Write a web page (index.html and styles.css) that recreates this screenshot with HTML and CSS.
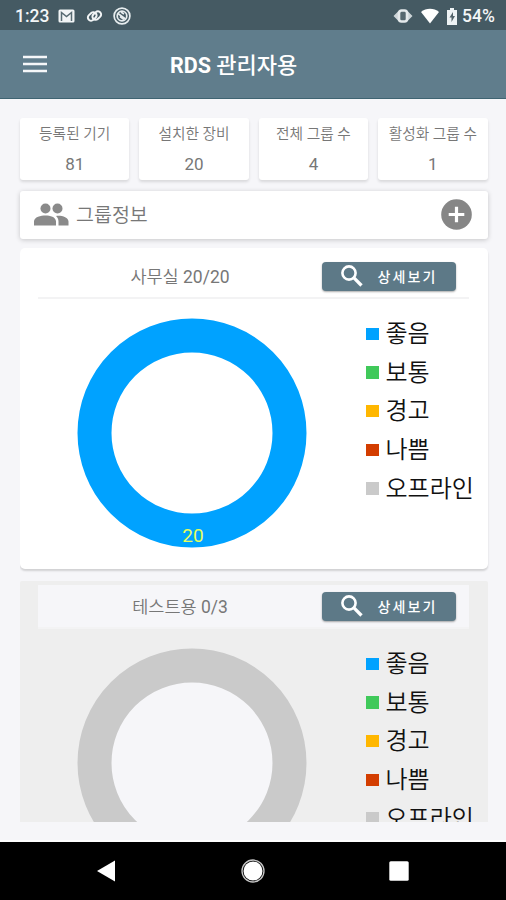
FILE: index.html
```html
<!DOCTYPE html>
<html lang="ko">
<head>
<meta charset="utf-8">
<title>RDS 관리자용</title>
<link rel="stylesheet" href="styles.css">
</head>
<body>
<div class="phone">
  <div class="status">
    <span class="time">1:23</span>
    <svg class="mail" width="17" height="14" viewBox="0 0 17 14"><rect x=".5" y=".5" width="16" height="13" rx="1.5" fill="#f2f5f6"/><path d="M3.5 12V3.5l5 4 5-4V12" fill="none" stroke="#586b73" stroke-width="1.5"/></svg>
    <svg class="link" width="17" height="16" viewBox="0 0 17 16" fill="none" stroke="#f2f5f6" stroke-width="2"><rect x="1.5" y="5.3" width="9.5" height="6.4" rx="3.2" transform="rotate(-42 6.2 8.5)"/><rect x="6" y="4.3" width="9.5" height="6.4" rx="3.2" transform="rotate(-42 10.8 7.5)"/></svg>
    <svg class="whale" width="18" height="18" viewBox="0 0 18 18" fill="none" stroke="#e7edef"><circle cx="9" cy="9" r="7.9" stroke-width="1.7"/><circle cx="9" cy="9" r="4.8" stroke-width="1.7"/><path d="M5 6.5l7.5 5.5M7 9.5l4 3M8 5l3 2" stroke-width="1.6"/></svg>
    <span class="spacer"></span>
    <svg class="vibrate" width="20" height="16" viewBox="0 0 20 16"><path d="M.5 8L5 3.500v9zM19.500 8L15 3.500v9z" fill="#cdd5d8"/><rect x="6" y="2.500" width="8" height="11" rx="2.500" fill="#56686f" stroke="#e4e9eb" stroke-width="2.600"/></svg>
    <svg class="wifi" width="18" height="16" viewBox="0 0 18 16"><path d="M0 4C5-.4 13-.4 18 4L9 15.500z" fill="#fff"/></svg>
    <svg class="battery" width="10" height="17" viewBox="0 0 10 17"><path d="M3 0h4v2h3v15H0V2h3z" fill="#edf2f4"/><path d="M6 4L2.500 9.500h2V14L8 8H6z" fill="#526269"/></svg>
    <span class="percent">54%</span>
  </div>
  <header class="appbar">
    <svg class="menu" width="24" height="18" viewBox="0 0 24 18"><path d="M0 2h24M0 9h24M0 16h24" stroke="#f5f7f9" stroke-width="2.600"/></svg>
    <h1>RDS <span>관리자용</span></h1>
  </header>
  <main class="content">
    <section class="stats">
      <div class="stat"><span>등록된 기기</span><b>81</b></div>
      <div class="stat"><span>설치한 장비</span><b>20</b></div>
      <div class="stat"><span>전체 그룹 수</span><b>4</b></div>
      <div class="stat"><span>활성화 그룹 수</span><b>1</b></div>
    </section>
    <section class="groupbar">
      <svg class="people" width="35" height="23" viewBox="0 0 35 23" fill="#8a8a8a"><circle cx="11.500" cy="5.500" r="5"/><circle cx="23.500" cy="5.500" r="5"/><path d="M0 22.500v-4C0 14 7 12.500 11.500 12.500S22 14 22 18.500v4zM24.500 22.500v-4c0-2.300-1.200-4.300-2.500-5.500 5-.8 12.500 1.200 12.500 5.500v4z"/></svg>
      <h2>그룹정보</h2>
      <svg class="add" width="31" height="31" viewBox="0 0 31 31"><circle cx="15.500" cy="15.500" r="15.300" fill="#868686"/><path d="M15.500 7.700v15.600M7.700 15.500h15.600" stroke="#fff" stroke-width="3.200"/></svg>
    </section>
    <div class="list">
      <article class="card online">
        <div class="card-head">
          <h3>사무실 <span>20/20</span></h3>
          <button class="detail"><svg width="22" height="22" viewBox="0 0 22 22" fill="none" stroke="#fff"><circle cx="8" cy="8" r="6.600" stroke-width="2.600"/><path d="M12.700 12.700l7.800 7.800" stroke-width="3.300"/></svg><span>상세보기</span></button>
        </div>
        <div class="card-body">
          <svg class="donut" width="230" height="230" viewBox="0 0 230 230"><circle cx="115" cy="115" r="97.500" fill="#fff" stroke="#00a2ff" stroke-width="34"/><text x="116" y="224" text-anchor="middle">20</text></svg>
          <ul class="legend"><li class="good">좋음</li><li class="normal">보통</li><li class="warn">경고</li><li class="bad">나쁨</li><li class="off">오프라인</li></ul>
        </div>
      </article>
      <article class="card offline">
        <div class="card-head">
          <h3>테스트용 <span>0/3</span></h3>
          <button class="detail"><svg width="22" height="22" viewBox="0 0 22 22" fill="none" stroke="#fff"><circle cx="8" cy="8" r="6.600" stroke-width="2.600"/><path d="M12.700 12.700l7.800 7.800" stroke-width="3.300"/></svg><span>상세보기</span></button>
        </div>
        <div class="card-body">
          <svg class="donut" width="230" height="230" viewBox="0 0 230 230"><circle cx="115" cy="115" r="97.500" fill="#f6f6f9" stroke="#cacaca" stroke-width="34"/></svg>
          <ul class="legend"><li class="good">좋음</li><li class="normal">보통</li><li class="warn">경고</li><li class="bad">나쁨</li><li class="off">오프라인</li></ul>
        </div>
      </article>
    </div>
  </main>
  <nav class="navbar">
    <svg width="20" height="24" viewBox="0 0 20 24"><path d="M1 12L19 1.500v21z" fill="#fff"/></svg>
    <svg width="24" height="24" viewBox="0 0 24 24"><circle cx="12" cy="12" r="9.500" fill="#fff"/><circle cx="12" cy="12" r="11" fill="none" stroke="#c8c8c8" stroke-width="1.300"/></svg>
    <svg width="20" height="24" viewBox="0 0 20 24"><rect x=".3" y="2.300" width="19.400" height="19.400" rx="1.500" fill="#fff"/></svg>
  </nav>
</div>
</body>
</html>
```
FILE: styles.css
```css
* { box-sizing: border-box; }
body { margin: 0; font-family: Roboto, "Noto Sans CJK KR", sans-serif; color: #777; }
h1, h2, h3, ul { margin: 0; padding: 0; font-weight: 400; }
svg { display: block; flex: none; }
.phone { width: 506px; height: 900px; display: flex; flex-direction: column; background: #f6f6f9; overflow: hidden; }

.status { height: 30px; flex: none; background: #455a63; display: flex; align-items: center; padding: 2px 9px 0 15px; color: #f3f6f7; font-size: 17.500px; font-weight: 500; }
.time { width: 43px; }
.link { margin-left: 11px; }
.whale { margin-left: 10px; }
.spacer { flex: 1; }
.wifi { margin-left: 8px; }
.battery { margin-left: 8px; }
.percent { margin-left: 5px; width: 35px; white-space: nowrap; }

.appbar { height: 69px; flex: none; background: #607d8c; border-bottom: 1px solid #3f6472; display: flex; align-items: center; padding-left: 23px; color: #fff; }
.appbar h1 { margin-left: 123px; font-size: 21.500px; font-weight: 700; line-height: 30px; padding-top: 3px; white-space: nowrap; }
.appbar h1 span { font-weight: 500; font-size: 22px; }

.content { flex: 1; min-height: 0; padding: 19px 18.500px 18px 20px; display: flex; flex-direction: column; border-bottom: 2px solid #fff; }
.stats { display: grid; grid-template-columns: repeat(4, 1fr); gap: 10px; height: 62px; flex: none; }
.stat { background: #fff; border-radius: 3px; box-shadow: 0 2px 3px #0000001f; display: flex; flex-direction: column; align-items: center; white-space: nowrap; }
.stat span { font-size: 14.700px; line-height: 20px; margin-top: 6px; font-weight: 350; }
.stat b { font-size: 17px; font-weight: 400; line-height: 20px; margin-top: 10px; }

.groupbar { margin-top: 11px; height: 48px; flex: none; background: #fff; border-radius: 3px; box-shadow: 0 1px 5px #0003; display: flex; align-items: center; padding: 0 16px 0 13.500px; }
.groupbar svg { margin-top: -1px; }
.groupbar h2 { font-size: 19.500px; font-weight: 350; line-height: 28px; margin-left: 7.500px; padding-top: 2px; }
.groupbar .add { margin-left: auto; }

.list { margin-top: 9px; flex: 1; min-height: 0; overflow: hidden; margin-right: -2px; padding-right: 2px; }
.card { border-radius: 5px; height: 321px; }
.online { background: #fff; padding-top: 7px; box-shadow: 0 2px 2px #00000026; }
.offline { margin-top: 12px; background: #eee; padding-top: 4px; border-radius: 2px; }
.card-head { height: 44px; margin: 0 19px 0 18px; display: flex; align-items: center; padding-right: 12.500px; border-bottom: 2px solid #f3f3f4; }
.offline .card-head { background: #f6f6f9; }
.card-head h3 { flex: 1; text-align: center; font-size: 17.500px; line-height: 24px; padding-top: 2px; white-space: nowrap; font-weight: 350; }
.card-head h3 span { font-weight: 400; }
.detail { width: 134px; height: 29px; border: 0; border-radius: 4px; background: #5d7987; box-shadow: 0 1px 2px #0005; padding: 0 0 0 19px; display: flex; align-items: center; color: #fff; font: 500 14px/20px Roboto, "Noto Sans CJK KR", sans-serif; }
.detail span { margin-left: 14.500px; margin-top: 2px; letter-spacing: 2.100px; white-space: nowrap; }
.card-body { display: flex; align-items: flex-start; padding: 19px 0 0 57px; }
.donut text { font-size: 19px; fill: #e6ff5c; }
.legend { list-style: none; margin: -3.500px 0 0 59px; color: #111; }
.legend li { height: 38.700px; display: flex; align-items: center; font-size: 24px; line-height: 36px; font-weight: 350; white-space: nowrap; }
.legend li::before { content: ""; width: 12.500px; height: 12.500px; margin-right: 7px; }
.good::before { background: #00a2ff; }
.normal::before { background: #40c95a; }
.warn::before { background: #ffb700; }
.bad::before { background: #d33d00; }
.off::before { background: #cacaca; }

.navbar { height: 58px; flex: none; background: #000; display: flex; justify-content: space-between; align-items: center; padding: 0 97px 0 96px; }
```
